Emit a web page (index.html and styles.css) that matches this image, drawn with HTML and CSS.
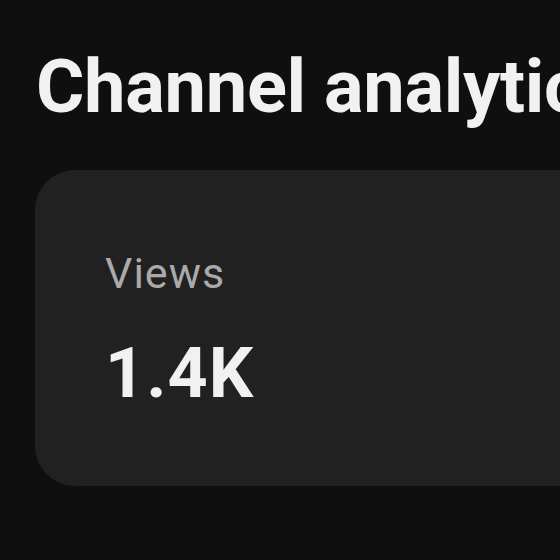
FILE: index.html
```html
<!DOCTYPE html>
<html lang="en">
<head>
<meta charset="utf-8">
<link rel="stylesheet" href="styles.css">
</head>
<body>
<main class="page">
  <h1 class="title">Channel analytics</h1>
  <section class="card">
    <div class="label">Views</div>
    <div class="value">1.4K</div>
  </section>
</main>
</body>
</html>
```
FILE: styles.css
```css
html, body {
  margin: 0;
  padding: 0;
  background: #0f0f0f;
  overflow: hidden;
}
.page {
  width: 560px;
  height: 560px;
  overflow: hidden;
  font-family: Roboto, "Liberation Sans", sans-serif;
  padding-top: 50px;
  box-sizing: border-box;
}
.title {
  margin: 0 0 46px 36px;
  font-size: 74px;
  line-height: 74px;
  font-weight: 700;
  color: #f1f1f1;
  white-space: nowrap;
  letter-spacing: -0.3px;
}
.card {
  margin-left: 35px;
  width: 700px;
  height: 316px;
  box-sizing: border-box;
  background: #212121;
  border-radius: 40px;
  padding: 83px 0 0 70px;
  display: flex;
  flex-direction: column;
  gap: 45px;
}
.label {
  font-size: 43px;
  line-height: 41px;
  color: #aaaaaa;
  font-weight: 400;
  letter-spacing: 1px;
}
.value {
  font-size: 70px;
  line-height: 69px;
  color: #f1f1f1;
  font-weight: 700;
  letter-spacing: 1px;
}
```
